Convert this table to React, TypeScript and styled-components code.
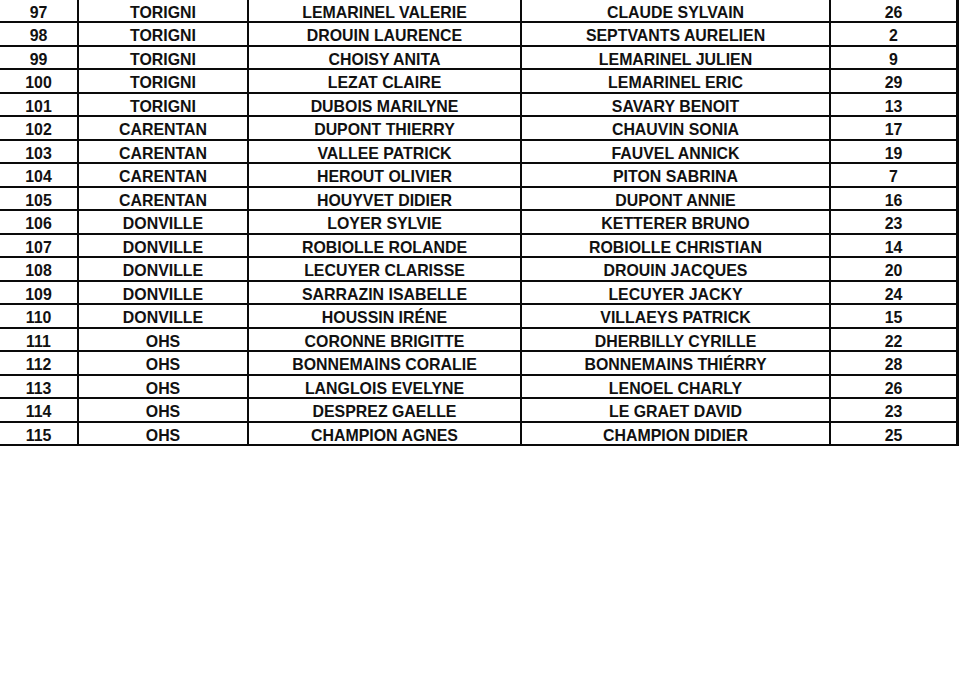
import React from "react";
import styled, { createGlobalStyle } from "styled-components";

const Global = createGlobalStyle`
  html, body { margin: 0; padding: 0; background: #ffffff; }
  body { width: 959px; height: 685px; overflow: hidden; }
`;

const Sheet = styled.div`
  width: 959px;
  margin-top: -0.5px;
  display: grid;
  grid-template-columns: 79px 170px 273px 309px 128px;
  grid-auto-rows: 23.5px;
  font-family: "Liberation Sans", Arial, sans-serif;
  font-weight: 700;
  font-size: 15.9px;
  color: #111;
`;

const Cell = styled.div<{ $last?: boolean }>`
  box-sizing: border-box;
  border-bottom: 2px solid #0a0a0a;
  border-right: ${(p) => (p.$last ? "3px" : "2px")} solid #0a0a0a;
  display: flex;
  align-items: center;
  justify-content: center;
  padding-top: 5px;
  white-space: nowrap;
  line-height: 1;
`;

const rows: [string, string, string, string, string][] = [
  ["97", "TORIGNI", "LEMARINEL VALERIE", "CLAUDE SYLVAIN", "26"],
  ["98", "TORIGNI", "DROUIN LAURENCE", "SEPTVANTS AURELIEN", "2"],
  ["99", "TORIGNI", "CHOISY ANITA", "LEMARINEL JULIEN", "9"],
  ["100", "TORIGNI", "LEZAT CLAIRE", "LEMARINEL ERIC", "29"],
  ["101", "TORIGNI", "DUBOIS MARILYNE", "SAVARY BENOIT", "13"],
  ["102", "CARENTAN", "DUPONT THIERRY", "CHAUVIN SONIA", "17"],
  ["103", "CARENTAN", "VALLEE PATRICK", "FAUVEL ANNICK", "19"],
  ["104", "CARENTAN", "HEROUT OLIVIER", "PITON SABRINA", "7"],
  ["105", "CARENTAN", "HOUYVET DIDIER", "DUPONT ANNIE", "16"],
  ["106", "DONVILLE", "LOYER SYLVIE", "KETTERER BRUNO", "23"],
  ["107", "DONVILLE", "ROBIOLLE ROLANDE", "ROBIOLLE CHRISTIAN", "14"],
  ["108", "DONVILLE", "LECUYER CLARISSE", "DROUIN JACQUES", "20"],
  ["109", "DONVILLE", "SARRAZIN ISABELLE", "LECUYER JACKY", "24"],
  ["110", "DONVILLE", "HOUSSIN IRÉNE", "VILLAEYS PATRICK", "15"],
  ["111", "OHS", "CORONNE BRIGITTE", "DHERBILLY CYRILLE", "22"],
  ["112", "OHS", "BONNEMAINS CORALIE", "BONNEMAINS THIÉRRY", "28"],
  ["113", "OHS", "LANGLOIS EVELYNE", "LENOEL CHARLY", "26"],
  ["114", "OHS", "DESPREZ GAELLE", "LE GRAET DAVID", "23"],
  ["115", "OHS", "CHAMPION AGNES", "CHAMPION DIDIER", "25"],
];

export default function App() {
  return (
    <>
      <Global />
      <Sheet>
        {rows.map((r) =>
          r.map((v, i) => (
            <Cell key={r[0] + "-" + i} $last={i === 4}>
              {v}
            </Cell>
          ))
        )}
      </Sheet>
    </>
  );
}
